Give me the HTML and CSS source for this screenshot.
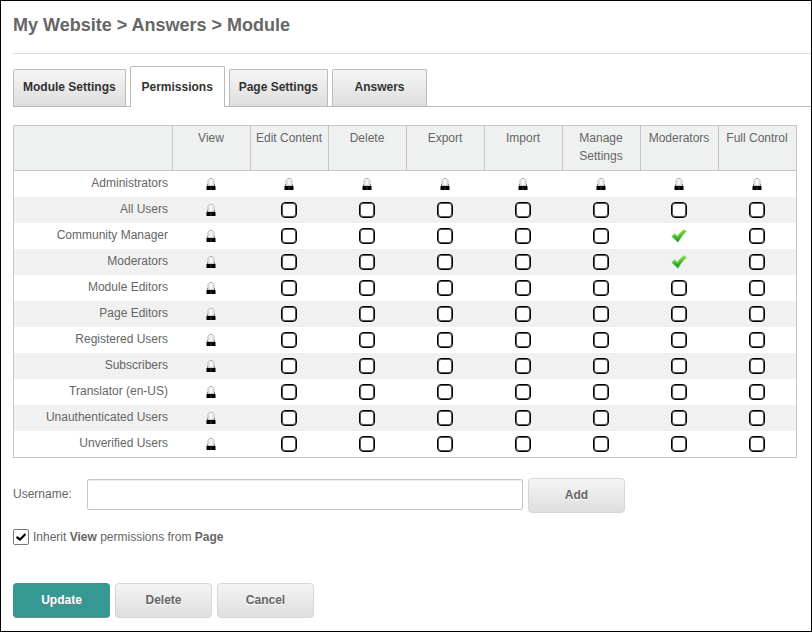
FILE: index.html
```html
<!DOCTYPE html>
<html lang="en">
<head>
<meta charset="utf-8">
<title>Module Permissions</title>
<link rel="stylesheet" href="styles.css">
</head>
<body>
<svg class="sprites" aria-hidden="true">
  <symbol id="lock" viewBox="0 0 10 14">
    <path d="M2 7V3.500L3.500 1.500H6.500L8 3.500V7" fill="#fff" stroke="#b4b4b4" stroke-width="1"/>
    <path d="M3.500 7V4L4.500 3H5.500L6.500 4V7" fill="none" stroke="#e2e2e2" stroke-width="1"/>
    <path d="M1 7h8v2H1z" fill="#ccc"/>
    <path d="M3 7h4v1H3z" fill="#f4f4f4"/>
    <path d="M1 7h1v2H1zM8 7h1v2H8z" fill="#888"/>
    <path d="M.500 9h9v4h-9z" fill="#000"/>
    <path d="M4.500 9.500h1v3h-1z" fill="#444"/>
  </symbol>
  <symbol id="tick" viewBox="0 0 16 14">
    <linearGradient id="leaf" x1="0" y1="0" x2="0" y2="1">
      <stop offset="0" stop-color="#86dc2c"/>
      <stop offset=".55" stop-color="#3cba2e"/>
      <stop offset="1" stop-color="#0f963c"/>
    </linearGradient>
    <path d="M.700 7.600 3.600 4.600 6.500 7C8.500 4.300 10.500 2.300 13.400.600L15.400 2.600C12.400 5.500 9.700 9 7 13.400z" fill="url(#leaf)" stroke="#9ccf90" stroke-width=".4" stroke-linejoin="round"/>
    <path d="M2 7.500 3.600 5.700 6.500 8.100C8.500 5.400 10.500 3.300 13.200 1.700" fill="none" stroke="#9ae052" stroke-width=".6"/>
  </symbol>
</svg>

<main class="page">
  <h1 class="title">My Website &gt; Answers &gt; Module</h1>

  <nav class="tabs">
    <a class="tab" href="#module">Module Settings</a>
    <a class="tab tab-active" href="#permissions" aria-current="page">Permissions</a>
    <a class="tab" href="#page">Page Settings</a>
    <a class="tab" href="#answers">Answers</a>
  </nav>

  <form class="content">
    <table class="grid">
      <thead>
        <tr>
          <td class="corner"></td>
          <th scope="col">View</th>
          <th scope="col">Edit Content</th>
          <th scope="col">Delete</th>
          <th scope="col">Export</th>
          <th scope="col">Import</th>
          <th scope="col">Manage Settings</th>
          <th scope="col">Moderators</th>
          <th scope="col">Full Control</th>
        </tr>
      </thead>
      <tbody id="roles"></tbody>
    </table>

    <div class="user">
      <label class="user-label" for="username">Username:</label>
      <input class="user-input" id="username" type="text">
      <button class="button" type="button">Add</button>
    </div>

    <div class="inherit">
      <input class="inherit-box" id="inherit" type="checkbox" checked>
      <label for="inherit">Inherit <b>View</b> permissions from <b>Page</b></label>
    </div>

    <div class="actions">
      <button class="button button-primary" type="button">Update</button>
      <button class="button" type="button">Delete</button>
      <button class="button" type="button">Cancel</button>
    </div>
  </form>
</main>
<script src="grid.js"></script>
</body>
</html>
```
FILE: styles.css
```css
* {
  box-sizing: border-box;
}

body {
  margin: 0;
  background: #fff;
  color: #666;
  font: 12px/18px "Liberation Sans", Arial, sans-serif;
}

.sprites {
  position: absolute;
  width: 0;
  height: 0;
}

.page {
  min-height: 100vh;
  padding-left: 12px;
  border: 1px solid #000;
}

.title {
  margin: 0 0 12px;
  padding: 12px 0 16px;
  border-bottom: 1px solid #ddd;
  font-size: 18px;
  line-height: 24px;
}

.tabs {
  display: flex;
  align-items: flex-end;
  gap: 4px;
  border-bottom: 1px solid #bbb;
}

.tab {
  min-width: 95px;
  padding: 8px 9px 10px;
  border: 1px solid #bbb;
  border-bottom: 0;
  border-radius: 2px 2px 0 0;
  background: linear-gradient(#f5f5f5, #dedede);
  color: #333;
  font-weight: bold;
  text-align: center;
  text-decoration: none;
}

.tab-active {
  margin-bottom: -1px;
  padding: 11px 9px;
  background: #fff;
}

.content {
  padding: 18px 14px 12px 0;
}

.grid {
  width: 100%;
  table-layout: fixed;
  border: 1px solid #c6c6c6;
  border-spacing: 0;
}

.grid td,
.grid th {
  width: 78px;
  height: 26px;
  padding: 0;
  font-weight: normal;
  text-align: center;
}

.grid thead td,
.grid thead th {
  height: 45px;
  padding: 3px 1px 5px 0;
  border-bottom: 1px solid #c6c6c6;
  background: #eff1f0;
  vertical-align: top;
}

.grid thead th {
  border-left: 1px solid #c6c6c6;
}

.grid thead .corner {
  width: auto;
}

.grid tbody th {
  padding: 3px 4px 5px 0;
  text-align: right;
}

.grid tbody tr:nth-child(even) {
  background: #f1f1f1;
}

.grid svg,
.grid input {
  display: block;
  margin: 0 auto;
}

.lock {
  width: 10px;
  height: 14px;
}

.tick {
  width: 16px;
  height: 14px;
}

.box {
  width: 16px;
  height: 16px;
  border: 1px solid #000;
  border-radius: 4px;
  background: #fff;
  box-shadow: inset 0 0 0 1px #555;
  appearance: none;
}

.user {
  display: flex;
  align-items: center;
  margin-top: 20px;
}

.user-label {
  flex: 0 0 74px;
  padding-bottom: 4px;
}

.user-input {
  flex: 0 1 436px;
  height: 31px;
  margin: 0 5px 2px 0;
  padding: 0 8px;
  border: 1px solid #c6c6c6;
  border-radius: 2px;
  box-shadow: inset 0 1px 1px #eee;
  font: inherit;
}

.button {
  width: 97px;
  height: 35px;
  padding: 0 0 2px;
  border: 1px solid #d6d6d6;
  border-radius: 4px;
  background: linear-gradient(#f5f5f5, #dedede);
  color: #666;
  font: inherit;
  font-weight: bold;
  text-shadow: 0 1px 0 #fff;
}

.button-primary {
  border-color: #359893 #359893 #7b8a88;
  background: #359893;
  color: #fff;
  text-shadow: 0 1px 0 #777;
}

.inherit {
  display: flex;
  align-items: center;
  gap: 4px;
  margin-top: 15px;
}

.inherit-box {
  width: 16px;
  height: 16px;
  margin: 0;
  border: 1px solid #777;
  border-radius: 2px;
  background: #fff;
  appearance: none;
}

.inherit-box:checked::before {
  content: "";
  display: block;
  width: 14px;
  height: 14px;
  background: #000;
  clip-path: polygon(2px 8px, 3px 6px, 6px 8px, 11px 3px, 12px 5px, 6px 11px);
}

.actions {
  display: flex;
  gap: 5px;
  margin-top: 37px;
}
```
FILE: grid.js
```js
const permissions = ["View", "Edit Content", "Delete", "Export", "Import", "Manage Settings", "Moderators", "Full Control"];

const roles = [
  { name: "Administrators", locked: permissions },
  { name: "All Users" },
  { name: "Community Manager", granted: ["Moderators"] },
  { name: "Moderators", granted: ["Moderators"] },
  { name: "Module Editors" },
  { name: "Page Editors" },
  { name: "Registered Users" },
  { name: "Subscribers" },
  { name: "Translator (en-US)" },
  { name: "Unauthenticated Users" },
  { name: "Unverified Users" }
];

function cell(role, permission) {
  const locked = role.locked || ["View"];
  const granted = role.granted || [];
  if (locked.includes(permission)) {
    return '<td><svg class="lock"><use href="#lock"/></svg></td>';
  }
  if (granted.includes(permission)) {
    return '<td><svg class="tick"><use href="#tick"/></svg></td>';
  }
  return `<td><input class="box" type="checkbox" aria-label="${role.name}: ${permission}"></td>`;
}

document.getElementById("roles").innerHTML = roles
  .map(role => `<tr><th scope="row">${role.name}</th>${permissions.map(p => cell(role, p)).join("")}</tr>`)
  .join("");
```
